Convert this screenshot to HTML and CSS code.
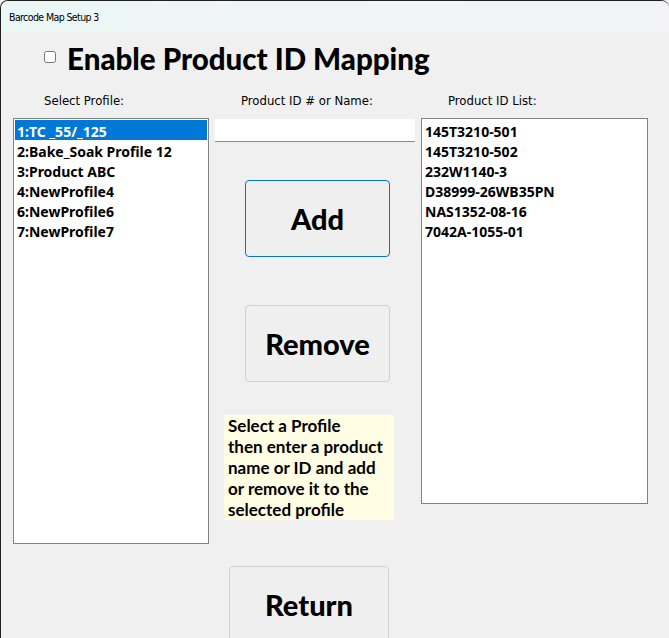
FILE: index.html
```html
<!DOCTYPE html>
<html lang="en">

<head>
    <meta charset="UTF-8">
    <meta name="viewport" content="width=device-width, initial-scale=1.0">
    <title>Barcode Map Setup 3</title>
    <link rel="stylesheet" href="styles.css">
</head>

<body>
    <div class="window">
        <div class="title-bar">Barcode Map Setup 3</div>

        <div class="content">
            <label class="enable-row">
                <input type="checkbox" class="enable-check">
                <span class="enable-text">Enable Product ID Mapping</span>
            </label>

            <div class="columns">
                <!-- profiles -->
                <div class="column col-profiles">
                    <div class="field-label">Select Profile:</div>
                    <ul class="listbox profile-list">
                        <li class="selected">1:TC _55/_125</li>
                        <li>2:Bake_Soak Profile 12</li>
                        <li>3:Product ABC</li>
                        <li>4:NewProfile4</li>
                        <li>6:NewProfile6</li>
                        <li>7:NewProfile7</li>
                    </ul>
                </div>

                <!-- entry and actions -->
                <div class="column col-actions">
                    <div class="field-label">Product ID # or Name:</div>
                    <input type="text" class="id-input">
                    <button class="big-button add-button">Add</button>
                    <button class="big-button remove-button">Remove</button>
                    <div class="hint">
                        Select a Profile<br>
                        then enter a product<br>
                        name or ID and add<br>
                        or remove it to the<br>
                        selected profile
                    </div>
                    <button class="big-button return-button">Return</button>
                </div>

                <!-- ids of the selected profile -->
                <div class="column col-ids">
                    <div class="field-label">Product ID List:</div>
                    <ul class="listbox id-list">
                        <li>145T3210-501</li>
                        <li>145T3210-502</li>
                        <li>232W1140-3</li>
                        <li>D38999-26WB35PN</li>
                        <li>NAS1352-08-16</li>
                        <li>7042A-1055-01</li>
                    </ul>
                </div>
            </div>
        </div>
    </div>
</body>

</html>
```

FILE: styles.css
```css
html,
body {
    margin: 0;
    height: 100%;
    overflow: hidden;
}

body {
    background-color: #f0f0f0;
    font-family: "Noto Sans", Arial, sans-serif;
}

.window {
    height: 100%;
    box-sizing: border-box;
    border-top: 1px solid #202020;
    border-left: 1px solid #202020;
    border-radius: 8px 8px 0 0;
    background-color: #f0f0f0;
    overflow: hidden;
}

.title-bar {
    height: 31px;
    padding-left: 8px;
    display: flex;
    align-items: center;
    font-family: "Liberation Sans Narrow", "DejaVu Sans Condensed", sans-serif;
    font-size: 10.5px;
    letter-spacing: -0.6px;
    color: #000;
    background: linear-gradient(to right, #e9f8f5, #f1f4f6 40%, #f3f3f5);
}

.content {
    padding-left: 12px;
}

.enable-row {
    display: flex;
    align-items: center;
    height: 52px;
    padding-left: 31px;
}

.enable-check {
    width: 12px;
    height: 12px;
    margin: 0 11px 3px 0;
}

.enable-text {
    font-family: Lato, "Noto Sans", sans-serif;
    font-weight: 900;
    font-size: 29.5px;
    color: #000;
}

.columns {
    display: grid;
    grid-template-columns: 196px 200px 227px;
    column-gap: 6px;
}

.column {
    display: flex;
    flex-direction: column;
}

.field-label {
    height: 34px;
    line-height: 34px;
    font-family: "Liberation Sans Narrow", "DejaVu Sans Condensed", sans-serif;
    font-size: 13px;
    color: #000;
}

.col-profiles .field-label {
    padding-left: 31px;
}

.col-actions .field-label {
    padding-left: 26px;
}

.col-ids .field-label {
    padding-left: 27px;
}

.listbox {
    list-style: none;
    margin: 0;
    padding: 1px;
    background-color: #fff;
    border: 1px solid #828282;
    font-weight: 700;
    font-size: 14px;
}

.listbox li {
    height: 18px;
    padding: 2px 0 0 2px;
    line-height: 20px;
    white-space: nowrap;
}

.listbox li.selected {
    background-color: #0078d7;
    color: #fff;
}

.profile-list {
    height: 422px;
}

.id-list {
    height: 382px;
}

.id-input {
    height: 23px;
    margin: 1px 0 0;
    padding: 0;
    box-sizing: border-box;
    border: none;
    border-bottom: 1px solid #8a8a8a;
    border-radius: 2px 2px 0 0;
    background-color: #fff;
}

.big-button {
    width: 145px;
    height: 77px;
    margin-left: 30px;
    box-sizing: border-box;
    border: 1px solid #d0d0d0;
    border-radius: 4px;
    background-color: #efefef;
    font-family: Lato, "Noto Sans", sans-serif;
    font-weight: 900;
    font-size: 29px;
    color: #000;
}

.add-button {
    margin-top: 38px;
    border-color: #0a72c8;
}

.remove-button {
    margin-top: 48px;
}

.hint {
    width: 166px;
    margin: 33px 0 0 9px;
    padding: 0 0 0 4px;
    height: 105px;
    background-color: #fffde3;
    font-family: Lato, "Noto Sans", sans-serif;
    font-weight: 700;
    font-size: 17px;
    line-height: 21px;
    color: #000;
}

.return-button {
    width: 160px;
    margin: 46px 0 0 14px;
}
```
